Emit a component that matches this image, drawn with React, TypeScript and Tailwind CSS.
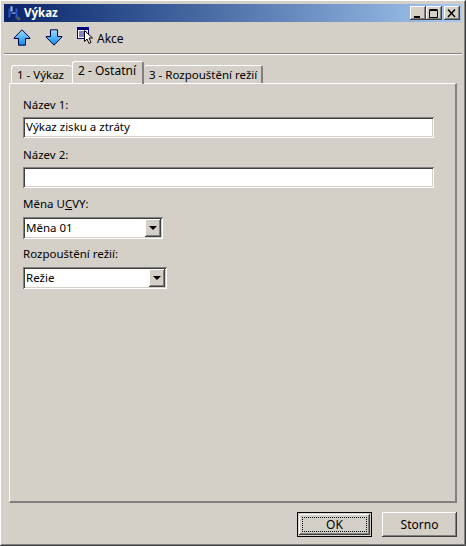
const raised =
  "shadow-[inset_-1px_-1px_#404040,inset_1px_1px_#ffffff,inset_-2px_-2px_#808080,inset_2px_2px_#d4d0c8]";
const sunken =
  "shadow-[inset_1px_1px_#808080,inset_-1px_-1px_#ffffff,inset_2px_2px_#404040,inset_-2px_-2px_#d4d0c8]";

function ArrowIcon({ down }: { down?: boolean }) {
  return (
    <svg width="18" height="17" viewBox="0 0 18 17" className={down ? "rotate-180" : ""}>
      <defs>
        <linearGradient id={down ? "ad" : "au"} x1="0" y1={down ? "1" : "0"} x2="0" y2={down ? "0" : "1"}>
          <stop offset="0" stopColor="#9fdcff" />
          <stop offset="1" stopColor="#0a8cf0" />
        </linearGradient>
      </defs>
      <path
        d="M9 .8 17 9v.5h-4.5v6.7h-7V9.500H1V9Z"
        fill={`url(#${down ? "ad" : "au"})`}
        stroke="#000040"
        strokeWidth="1"
      />
    </svg>
  );
}

function ActionIcon() {
  return (
    <svg width="17" height="18" viewBox="0 0 17 18">
      <rect x="0.500" y="0.500" width="11" height="11" fill="#fff" stroke="#000080" />
      <rect x="1" y="1" width="10" height="2" fill="#000080" />
      <path d="M2 5h8M2 7h8M2 9h6" stroke="#000080" strokeWidth="1" />
      <path d="M7.500 3.500v11l2.500-2.500 2 4.500 2-1-2-4.500h3.500Z" fill="#fff" stroke="#000" strokeWidth="1" />
    </svg>
  );
}

function AppIcon() {
  return (
    <svg width="14" height="16" viewBox="0 0 14 16">
      <path d="M1 3h3v10H1ZM8 3h3v11H8Z" fill="#2a5ad0" stroke="#0a1a50" strokeWidth="0.800" />
      <path d="M3 1h3v6H3ZM4 7h5v2H4Z" fill="#7fb0f0" stroke="#0a1a50" strokeWidth="0.600" />
      <circle cx="11.500" cy="13.500" r="2" fill="#555" />
    </svg>
  );
}

function CaptionButton({ kind }: { kind: "min" | "max" | "close" }) {
  return (
    <div className={`flex h-[14px] w-[16px] items-center justify-center bg-[#d4d0c8] ${raised}`}>
      <svg width="10" height="9" viewBox="0 0 10 9">
        {kind === "min" && <rect x="1" y="7" width="6" height="2" fill="#000" />}
        {kind === "max" && (
          <path d="M.500 1.500h8v7h-8ZM.500 .500h8" fill="none" stroke="#000" strokeWidth="1" />
        )}
        {kind === "close" && <path d="M1 .500 8 8M8 .500 1 8" stroke="#000" strokeWidth="1.500" />}
      </svg>
    </div>
  );
}

function ComboBox({ value, width }: { value: string; width: string }) {
  return (
    <div className={`flex h-[22px] items-stretch bg-white p-[2px] ${width} ${sunken}`}>
      <span className="flex-1 pl-px text-[11.5px] leading-[18px] text-black">{value}</span>
      <div className={`flex w-[16px] items-center justify-center bg-[#d4d0c8] ${raised}`}>
        <div className="h-0 w-0 border-x-[4px] border-t-[4px] border-x-transparent border-t-black" />
      </div>
    </div>
  );
}

function TextField({ value }: { value?: string }) {
  return (
    <div className={`h-[21px] w-[411px] bg-white px-[3px] text-[11.5px] leading-[20px] text-black ${sunken}`}>
      {value}
    </div>
  );
}

export default function App() {
  return (
    <div
      className={`flex h-[546px] w-[466px] flex-col bg-[#d4d0c8] p-[4px] pb-[3px] text-[11.5px] text-black ${raised}`}
      style={{ fontFamily: '"Noto Sans", sans-serif' }}
    >
      <div className="flex h-[18px] shrink-0 items-center bg-gradient-to-r from-[#0a246a] to-[#a6caf0] pl-[3px] pr-[2px]">
        <AppIcon />
        <span className="ml-[3px] flex-1 text-[11.5px] font-bold text-white">Výkaz</span>
        <CaptionButton kind="min" />
        <CaptionButton kind="max" />
        <div className="w-[2px]" />
        <CaptionButton kind="close" />
      </div>

      <div className="flex h-[31px] shrink-0 items-center pl-[9px]">
        <ArrowIcon />
        <div className="ml-[14px]">
          <ArrowIcon down />
        </div>
        <div className="mb-[3px] ml-[14px]">
          <ActionIcon />
        </div>
        <span className="ml-[3px] pt-[2px] text-[12px]">Akce</span>
      </div>
      <div className="h-[2px] shrink-0 border-t border-b border-t-[#808080] border-b-white" />

      <div className="mt-[6px] flex h-[22px] shrink-0 items-end pl-[7px]">
        <div className="h-[18px] w-[61px] rounded-t-[3px] border-t border-l border-white pl-[5px] text-[11.5px] leading-[17px]">
          1 - Výkaz
        </div>
        <div className="relative z-10 -mb-px h-[23px] w-[72px] rounded-t-[3px] border-t border-l border-r-2 border-t-white border-l-white border-r-[#808080] pl-[5px] text-[12px] leading-[18px]">
          2 - Ostatní
        </div>
        <div className="h-[18px] w-[119px] rounded-t-[3px] border-t border-r-2 border-t-white border-r-[#808080] pl-[5px] text-[11.5px] leading-[17px]">
          3 - Rozpouštění režií
        </div>
      </div>

      <div className="mx-[5px] h-[420px] shrink-0 border-t border-l border-r-2 border-b-2 border-t-white border-l-white border-r-[#808080] border-b-[#808080] pl-[13px] pt-[13px]">
        <div className="h-[20px] leading-[16px]">Název 1:</div>
        <TextField value="Výkaz zisku a ztráty" />
        <div className="mt-[8px] h-[21px] leading-[18px]">Název 2:</div>
        <TextField />
        <div className="mt-[8px] h-[21px] leading-[16px]">
          Měna U<span className="underline">C</span>VY:
        </div>
        <ComboBox value="Měna 01" width="w-[140px]" />
        <div className="mt-[7px] h-[21px] leading-[16px]">
          Rozpouštění režií:
        </div>
        <ComboBox value="Režie" width="w-[144px]" />
      </div>

      <div className="mr-[4px] mt-[9px] flex shrink-0 justify-end gap-[10px] pr-px">
        <div className="h-[25px] w-[75px] border border-black p-[1px]">
          <div className={`h-full w-full bg-[#d4d0c8] p-[3px] ${raised}`}>
            <div className="flex h-full w-full items-center justify-center border border-dotted border-black text-[12px]">
              OK
            </div>
          </div>
        </div>
        <div className={`flex h-[25px] w-[75px] items-center justify-center text-[12px] ${raised}`}>
          Storno
        </div>
      </div>
    </div>
  );
}
